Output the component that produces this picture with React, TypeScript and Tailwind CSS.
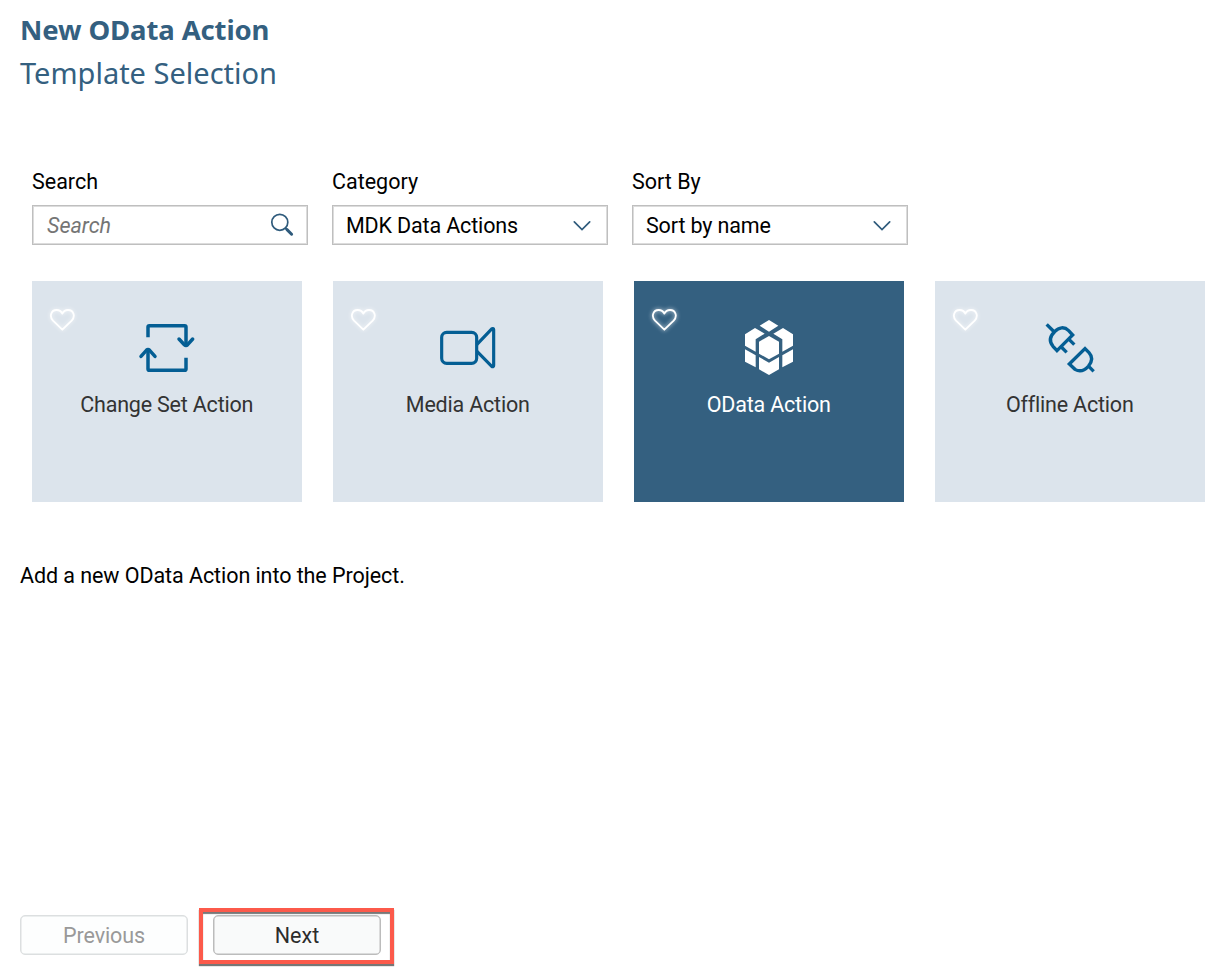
import type { ReactNode } from "react";

const fieldBox =
  "flex h-10 w-[275.5px] items-center justify-between border border-[#bfbfbf] bg-white pl-[13px] pr-[13px] shadow-[inset_0_0_0_1px_#dcdcdc]";

function Heart() {
  return (
    <svg
      viewBox="58 98 80 72"
      fill="none"
      stroke="white"
      strokeWidth="5.5"
      strokeLinejoin="round"
      className="absolute left-[17px] top-[27px] h-6 w-[26.7px] drop-shadow-[0_0_2px_rgba(255,255,255,0.8)]"
    >
      <path d="M98 163 L70 136 C58 123 64 104 81 104 C90 104 95 109 98 115 C101 109 106 104 115 104 C132 104 138 123 126 136 Z" />
    </svg>
  );
}

function ChangeSetIcon() {
  return (
    <svg viewBox="324 132 174 171" fill="none" stroke="#045e94" strokeWidth="10.5" className="h-[57px] w-[58px]">
      <path d="M354 187 V156 Q354 152 358 152 H464 Q468 152 468 156 V212" />
      <path d="M468 248 V282 Q468 286 464 286 H358 Q354 286 354 282 V224" />
      <path d="M447 192 L463 209 Q468 214 473 209 L488 192" strokeLinecap="round" />
      <path d="M333 244 L349 226 Q354 221 359 226 L375 244" strokeLinecap="round" />
    </svg>
  );
}

function MediaIcon() {
  return (
    <svg viewBox="327 132 174 171" fill="none" stroke="#045e94" strokeWidth="9.5" strokeLinejoin="round" className="h-[57px] w-[58px]">
      <rect x="335" y="172" width="105" height="93" rx="15" />
      <path d="M441 208 L486 161 Q491 159 491 164 V271 Q491 276 486 275 L441 229" />
    </svg>
  );
}

function ODataIcon() {
  return (
    <svg viewBox="330 132 174 171" fill="white" className="h-[57px] w-[58px]">
      <path d="M417 135 L445 152 L417 170 L389 152 Z" />
      <path d="M345 178 L375 159 L404 176 L377 193 V230 L345 212 Z" />
      <path d="M489 178 L459 159 L430 176 L457 193 V230 L489 212 Z" />
      <path d="M417 183 L447 200 V236 L417 253 L387 236 V200 Z" />
      <path d="M345 223 L377 241 V277 L345 260 Z" />
      <path d="M489 223 L457 241 V277 L489 260 Z" />
      <path d="M387 246 L417 263 L447 246 V283 L417 300 L387 283 Z" />
    </svg>
  );
}

function OfflineIcon() {
  return (
    <svg viewBox="333 132 174 171" fill="none" stroke="#045e94" strokeWidth="10" className="h-[57px] w-[58px]">
      <path d="M350 148 L373 171 M414 190 L433 209 M391 213 L410 232" />
      <path d="M381 227 L428 180 L416 167 C403 154 387 156 374 170 C359 184 357 199 369 214 Z" />
      <path d="M418 267 L465 221 L477 233 C489 246 487 260 475 274 C461 289 447 290 435 283 Z M474 272 L491 289" />
    </svg>
  );
}

function SearchIcon() {
  return (
    <svg viewBox="0 0 24 24" fill="none" stroke="#2f5b7c" strokeLinecap="round" className="h-6 w-6">
      <circle cx="9.8" cy="9.3" r="8" strokeWidth="1.7" />
      <path d="M15.6 15.3 L16.6 16.2" strokeWidth="2" />
      <path d="M17 16.6 L21.6 21.2" strokeWidth="3" />
    </svg>
  );
}

function Chevron() {
  return (
    <svg viewBox="0 0 24 24" fill="none" stroke="#2f5b7c" strokeWidth="1.7" strokeLinecap="round" className="h-6 w-6">
      <path d="M4.3 8.9 L12 16.5 L19.7 8.9" />
    </svg>
  );
}

function Field({ label, children }: { label: string; children: ReactNode }) {
  return (
    <div className="flex w-[275.5px] flex-col">
      <span className="flex h-8 items-center pt-px">{label}</span>
      <div className="mt-2">{children}</div>
    </div>
  );
}

function SelectBox({ value }: { value: string }) {
  return (
    <button className={fieldBox}>
      <span className="pt-0.5 tracking-[-0.15px]">{value}</span>
      <Chevron />
    </button>
  );
}

function Card({ title, icon, selected = false }: { title: string; icon: ReactNode; selected?: boolean }) {
  return (
    <div
      className={`relative flex h-[221px] w-[269.5px] flex-col items-center pt-[38px] ${
        selected ? "bg-[#346080] text-white" : "bg-[#dce4ec] text-[#333333]"
      }`}
    >
      <Heart />
      {icon}
      <span className="mt-[13px] leading-8 tracking-[-0.2px]">{title}</span>
    </div>
  );
}

export default function App() {
  return (
    <main className="flex h-[967px] w-[1224px] flex-col overflow-hidden bg-white font-['Roboto',sans-serif] text-[21.5px] leading-8 text-black">
      <header className="pl-5 pt-2 font-['Noto_Sans',sans-serif] text-[#346080]">
        <h1 className="text-[27.5px] font-bold leading-[43px] tracking-[-0.12px]">New OData Action</h1>
        <h2 className="text-[29px] font-normal leading-[44px]">Template Selection</h2>
      </header>

      <section className="mt-[70px] flex gap-[24.5px] pl-8">
        <Field label="Search">
          <label className={fieldBox}>
            <input
              placeholder="Search"
              className="ml-px w-48 bg-transparent pt-0.5 outline-none placeholder:italic placeholder:text-[#757575]"
            />
            <SearchIcon />
          </label>
        </Field>
        <Field label="Category">
          <SelectBox value="MDK Data Actions" />
        </Field>
        <Field label="Sort By">
          <SelectBox value="Sort by name" />
        </Field>
      </section>

      <section className="ml-8 mt-9 flex w-[1172.5px] justify-between">
        <Card title="Change Set Action" icon={<ChangeSetIcon />} />
        <Card title="Media Action" icon={<MediaIcon />} />
        <Card title="OData Action" icon={<ODataIcon />} selected />
        <Card title="Offline Action" icon={<OfflineIcon />} />
      </section>

      <p className="mt-[58px] pl-5 tracking-[-0.07px]">Add a new OData Action into the Project.</p>

      <footer className="mb-3 mt-auto flex gap-[25px] pl-5">
        <button className="h-10 w-[168px] rounded-[5px] border border-[#dcdfe0] bg-[#fdfefe] pt-0.5 text-[#999999] shadow-[inset_0_0_0_0.5px_#dcdfe0] tracking-[-0.1px]">
          Previous
        </button>
        <div className="relative">
          <button className="h-10 w-[168px] rounded-[5px] border border-[#bcbcbc] bg-[#f9fafa] pt-0.5 text-[#2c2c2c] shadow-[inset_0_0_0_0.5px_#bcbcbc]">
            Next
          </button>
          <div className="pointer-events-none absolute -left-[14px] -top-[7px] h-[56px] w-[195px] border-[4.5px] border-[#fc5a4b] shadow-[0_2px_1px_#777777,inset_0_2px_1px_#777777]" />
        </div>
      </footer>
    </main>
  );
}
